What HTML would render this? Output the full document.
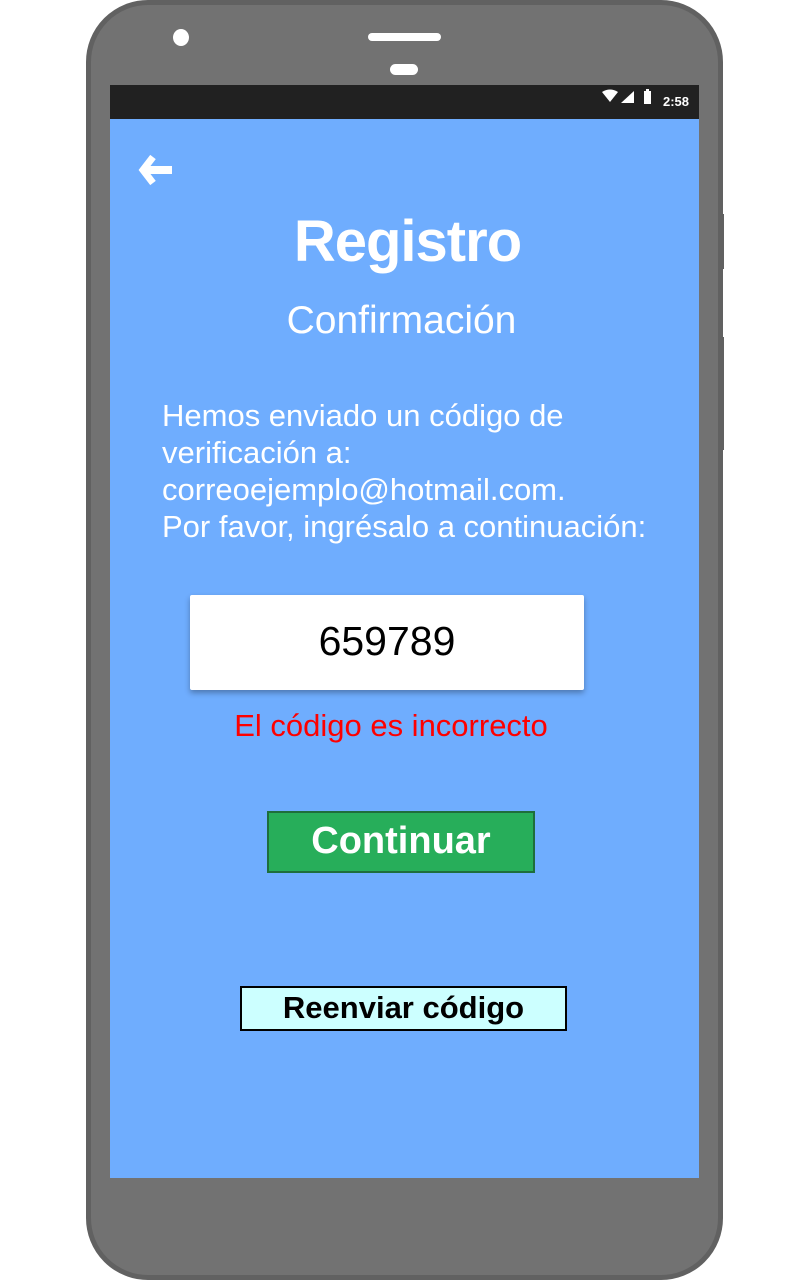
<!DOCTYPE html>
<html><head><meta charset="utf-8"><style>
html,body{margin:0;padding:0;width:800px;height:1280px;background:#fff;overflow:hidden;font-family:"Liberation Sans",sans-serif}
.a{position:absolute}
.phone{left:86px;top:0;width:637px;height:1280px;background:#727272;border:5px solid #616161;border-radius:62px;box-sizing:border-box}
.screen{left:110px;top:119px;width:589px;height:1059px;background:#6fadfe}
.sb{left:110px;top:85px;width:589px;height:34px;background:#212121}
.t{color:#fff;white-space:nowrap}
</style></head><body>
<div class="a phone"></div>
<div class="a" style="left:719px;top:214px;width:5px;height:55px;background:#616161"></div>
<div class="a" style="left:719px;top:337px;width:5px;height:113px;background:#616161"></div>
<div class="a" style="left:173px;top:29px;width:16px;height:17px;border-radius:50%;background:#fff"></div>
<div class="a" style="left:368px;top:33px;width:73px;height:8px;border-radius:4px;background:#fff"></div>
<div class="a" style="left:390px;top:64px;width:28px;height:11px;border-radius:6px;background:#fff"></div>
<div class="a sb"></div>
<svg class="a" style="left:600px;top:88px" width="60" height="20" viewBox="0 0 60 20">
<path d="M2 4 Q10 -1 18 4 L10 14 Z" fill="#fff"/>
<path d="M21 15 L34 15 L34 3 Z" fill="#fff"/>
<rect x="44" y="3" width="7" height="13" fill="#fff"/><rect x="46" y="1" width="3" height="2" fill="#fff"/>
</svg>
<div class="a t" style="left:663px;top:94px;font-size:13px;font-weight:bold">2:58</div>
<div class="a screen"></div>
<svg class="a" style="left:138px;top:153px" width="36" height="36" viewBox="0 0 36 36">
<path d="M15 4 L5 17 L15 30" stroke="#fff" stroke-width="7" fill="none"/>
<rect x="8" y="13" width="26" height="8" fill="#fff"/>
</svg>
<div class="a t" style="left:110px;width:595px;text-align:center;top:208px;font-size:58px;font-weight:bold;letter-spacing:-1px">Registro</div>
<div class="a t" style="left:110px;width:583px;text-align:center;top:299px;font-size:39px">Confirmación</div>
<div class="a t" style="left:162px;top:397px;font-size:31px;line-height:37px">Hemos enviado un código de<br>verificación a:<br>correoejemplo@hotmail.com.<br>Por favor, ingrésalo a continuación:</div>
<div class="a" style="left:190px;top:595px;width:394px;height:95px;background:#fff;border-radius:2px;box-shadow:0 3px 6px rgba(0,0,0,.3)"></div>
<div class="a" style="left:190px;top:618px;width:394px;text-align:center;font-size:41px;color:#000">659789</div>
<div class="a" style="left:110px;width:562px;text-align:center;top:708px;font-size:31px;color:#fe0000">El código es incorrecto</div>
<div class="a" style="left:267px;top:811px;width:268px;height:62px;background:#27ae5a;border:2px solid #1e6e3c;box-sizing:border-box"></div>
<div class="a t" style="left:267px;width:268px;text-align:center;top:820px;font-size:38px;font-weight:bold">Continuar</div>
<div class="a" style="left:240px;top:986px;width:327px;height:45px;background:#ccffff;border:2px solid #000;box-sizing:border-box"></div>
<div class="a" style="left:240px;width:327px;text-align:center;top:990px;font-size:31px;font-weight:bold;color:#000">Reenviar código</div>
</body></html>
